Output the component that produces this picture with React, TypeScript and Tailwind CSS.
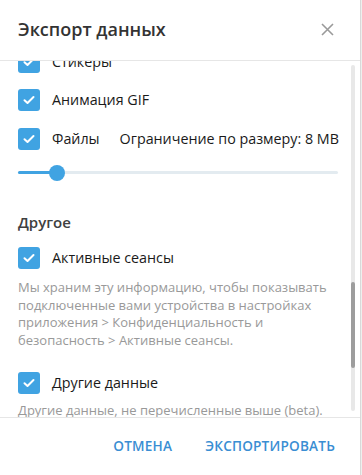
import React from "react";

function Check() {
  return (
    <div className="w-[22px] h-[22px] rounded-[3px] bg-[#40a3e2] flex items-center justify-center shrink-0">
      <svg width="12" height="10" viewBox="0 0 12 10" fill="none">
        <path d="M1.5 5.2 L4.5 8 L10.5 2" stroke="white" strokeWidth="2" strokeLinecap="round" strokeLinejoin="round" />
      </svg>
    </div>
  );
}

function Row({ label, extra }: { label: string; extra?: string }) {
  return (
    <div className="flex items-center h-[22px] whitespace-nowrap">
      <Check />
      <span className="ml-[12px] text-[14.3px] text-[#1a1a1a] leading-none">{label}</span>
      {extra && <span className="ml-[20px] text-[14.3px] text-[#1a1a1a] leading-none">{extra}</span>}
    </div>
  );
}

export default function App() {
  return (
    <div className="w-[362px] h-[475px] flex bg-white overflow-hidden" style={{ fontFamily: '"Open Sans", "Noto Sans", sans-serif' }}>
      <div className="w-[360px] h-full flex flex-col bg-white">
        <div className="h-[61px] shrink-0 flex items-center justify-between pl-[18px] pr-[26px] border-b border-[#e6e6e6]">
          <span className="text-[18px] font-semibold text-[#333] -mt-[2px]">Экспорт данных</span>
          <svg width="13" height="13" viewBox="0 0 13 13" className="-mt-[2px]">
            <path d="M1 1 L12 12 M12 1 L1 12" stroke="#9a9a9a" strokeWidth="1.6" />
          </svg>
        </div>
        <div className="relative flex-1 overflow-hidden">
          <div className="flex flex-col pl-[18px] pr-[22px] -mt-[10px]">
            <Row label="Стикеры" />
            <div className="h-[16px]" />
            <Row label="Анимация GIF" />
            <div className="h-[17px]" />
            <Row label="Файлы" extra="Ограничение по размеру: 8 MB" />
            <div className="h-[23px] flex items-center mt-[11px]">
              <div className="relative w-full h-[3px] bg-[#e3ebf0] rounded-full">
                <div className="absolute left-0 top-0 h-[3px] w-[39px] bg-[#40a3e2] rounded-full" />
                <div className="absolute left-[31px] top-[-6.5px] w-[16px] h-[16px] rounded-full bg-[#40a3e2]" />
              </div>
            </div>
            <div className="h-[28px]" />
            <div className="text-[15px] font-semibold text-[#404040] leading-[20px]">Другое</div>
            <div className="h-[15px]" />
            <Row label="Активные сеансы" />
            <div className="mt-[10px] text-[13px] leading-[17.5px] text-[#999]">
              Мы храним эту информацию, чтобы показывать подключенные вами устройства в настройках приложения &gt; Конфиденциальность и безопасность &gt; Активные сеансы.
            </div>
            <div className="h-[23px]" />
            <Row label="Другие данные" />
            <div className="mt-[8px] text-[13px] leading-[17.5px] text-[#999] whitespace-nowrap">
              Другие данные, не перечисленные выше (beta).
            </div>
          </div>
          <div className="absolute left-[351px] top-[4px] w-[4px] h-[346px] bg-[#e8e8e8] rounded-sm">
            <div className="absolute left-0 top-[217px] w-[4px] h-[86px] bg-[#9d9d9d] rounded-sm" />
          </div>
        </div>
        <div className="h-[58px] shrink-0 border-t border-[#e6e6e6] flex items-center justify-end pr-[25px] gap-[33px]">
          <span className="text-[13.6px] font-semibold text-[#3a8ed3] tracking-[0.2px]">ОТМЕНА</span>
          <span className="text-[13.6px] font-semibold text-[#3a8ed3] tracking-[0.2px]">ЭКСПОРТИРОВАТЬ</span>
        </div>
      </div>
      <div className="w-[1px] h-full bg-[#d9d9d9]" />
      <div className="w-[1px] h-full bg-[#eef0ee]" />
    </div>
  );
}
